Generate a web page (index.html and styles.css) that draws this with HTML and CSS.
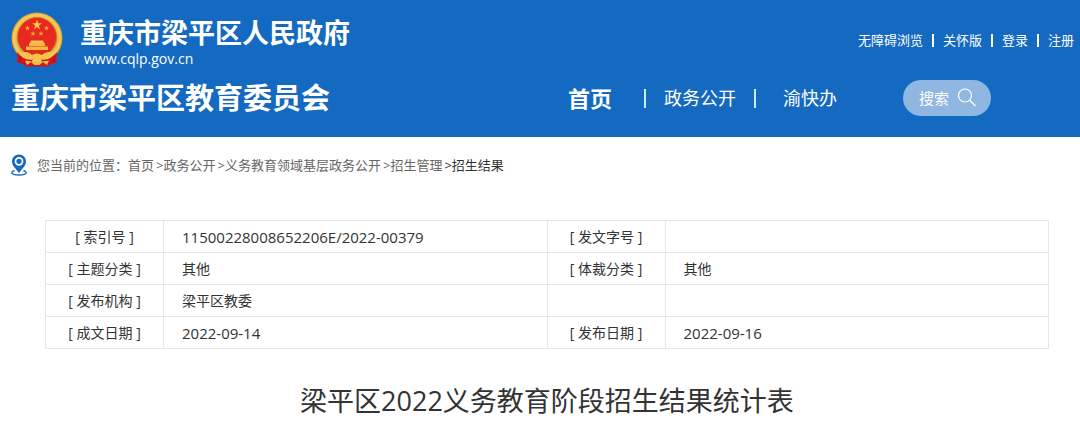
FILE: index.html
```html
<!DOCTYPE html>
<html lang="zh-CN">
<head>
  <meta charset="UTF-8">
  <meta name="viewport" content="width=device-width, initial-scale=1">
  <title>梁平区2022义务教育阶段招生结果统计表</title>
  <link rel="stylesheet" href="styles.css">
</head>
<body>

<header class="header">
  <div class="header-top">
    <a class="logo" href="#">
      <svg class="emblem" viewBox="0 0 52 56" aria-hidden="true">
        <path d="M8 38 L7 51 Q12 51 15 54.500 H37 Q40 51 45 51 L44 38 Z" fill="#d3141b"/>
        <circle cx="26" cy="26" r="25.500" fill="#dca136"/>
        <circle cx="26" cy="26" r="22.500" fill="none" stroke="#efc24e" stroke-width="4"/>
        <circle cx="26" cy="26" r="23" fill="none" stroke="#f5d468" stroke-width="1"/>
        <circle cx="26" cy="25" r="19.500" fill="#e9281f" stroke="#c9761e" stroke-width=".8"/>
        <path d="M26 7.500 L27.200 11.300 H31 L27.900 13.600 L29.100 17.400 L26 15 L22.900 17.400 L24.100 13.600 L21 11.300 H24.800 Z" fill="#f8c840"/>
        <g fill="#f3ad35">
          <path d="M16.500 13.500 l.7 1.700 h1.800 l-1.400 1.200 .5 1.800 -1.600-1 -1.600 1 .5-1.800 -1.400-1.200 h1.800z"/>
          <path d="M35.500 13.500 l.7 1.700 h1.800 l-1.400 1.200 .5 1.800 -1.600-1 -1.600 1 .5-1.800 -1.400-1.200 h1.800z"/>
          <path d="M22 19 l.7 1.700 h1.800 l-1.400 1.200 .5 1.800 -1.600-1 -1.600 1 .5-1.800 -1.400-1.200 h1.800z"/>
          <path d="M30 19 l.7 1.700 h1.800 l-1.400 1.200 .5 1.800 -1.600-1 -1.600 1 .5-1.800 -1.400-1.200 h1.800z"/>
        </g>
        <path d="M20 28.500 H32 L33 31 H19 Z" fill="#f6c552"/>
        <path d="M18 31 H34 V34 H18 Z" fill="#f3b843"/>
        <path d="M15 34.500 H37 V38 H15 Z" fill="#f3b843"/>
        <path d="M12 38.500 H40 Q35 44 26 44 Q17 44 12 38.500 Z" fill="#e2281c"/>
        <path d="M8 40 Q17 39 21 43 Q26 40 31 43 Q35 39 44 40 Q38 47 31 46 Q26 48 21 46 Q14 47 8 40 Z" fill="#f3c34b"/>
        <path d="M6 40 Q13 49 22 47.500 L18 54.500 Q12 50 6.500 51 Z M46 40 Q39 49 30 47.500 L34 54.500 Q40 50 45.500 51 Z" fill="#d5151c"/>
        <path d="M8 44 Q10 48 9 50 M44 44 Q42 48 43 50" stroke="#a80f14" stroke-width="1" fill="none"/>
        <circle cx="26" cy="45" r="2.500" fill="#f3c34b"/>
        <path d="M14 48.500 L21 49.500 L16 53 Z M38 48.500 L31 49.500 L36 53 Z M21 51 Q26 47 31 51 L28.500 53 H23.500 Z" fill="#f0bd45"/>
      </svg>
      <span class="logo-text">
        <span class="logo-name">重庆市梁平区人民政府</span>
        <span class="logo-url">www.cqlp.gov.cn</span>
      </span>
    </a>
    <nav class="top-links">
      <a href="#">无障碍浏览</a>
      <a href="#">关怀版</a>
      <a href="#">登录</a>
      <a href="#">注册</a>
    </nav>
  </div>

  <div class="header-main">
    <div class="dept">重庆市梁平区教育委员会</div>
    <nav class="nav">
      <a class="active" href="#">首页</a>
      <a class="wide" href="#">政务公开</a>
      <a href="#">渝快办</a>
    </nav>
    <form class="search">
      <input type="text" placeholder="搜索" aria-label="搜索">
      <button type="button" aria-label="搜索">
        <svg viewBox="0 0 20 20" width="20" height="20" fill="none" stroke="currentColor">
          <circle cx="8" cy="7.500" r="6.500" stroke-width="1.200"/>
          <path d="M12.700 12.200 L18.500 18" stroke-width="1.400"/>
        </svg>
      </button>
    </form>
  </div>
</header>

<nav class="crumbs">
  <svg class="pin" viewBox="0 0 16 22" aria-hidden="true">
    <path d="M3.500 16.500 C-1 18 0 21 8 21 S17 18 12.500 16.500" fill="none" stroke="#1469c1" stroke-width="1.400"/>
    <path d="M8 .5 C4 .5 1 3.500 1 7.500 C1 12 5 14.500 8 19 C11 14.500 15 12 15 7.500 C15 3.500 12 .5 8 .5 Z" fill="#1469c1"/>
    <circle cx="8" cy="7.300" r="3.500" fill="none" stroke="#fff" stroke-width="1.700"/>
  </svg>
  <span>您当前的位置：</span>
  <a href="#">首页</a>
  <a href="#">政务公开</a>
  <a href="#">义务教育领域基层政务公开</a>
  <a href="#">招生管理</a>
  <a class="current" href="#">招生结果</a>
</nav>

<main class="content">
  <table class="info">
    <tr>
      <th scope="row">[ 索引号 ]</th>
      <td class="num">11500228008652206E/2022-00379</td>
      <th scope="row">[ 发文字号 ]</th>
      <td></td>
    </tr>
    <tr>
      <th scope="row">[ 主题分类 ]</th>
      <td>其他</td>
      <th scope="row">[ 体裁分类 ]</th>
      <td>其他</td>
    </tr>
    <tr>
      <th scope="row">[ 发布机构 ]</th>
      <td>梁平区教委</td>
      <td></td>
      <td></td>
    </tr>
    <tr>
      <th scope="row">[ 成文日期 ]</th>
      <td class="num">2022-09-14</td>
      <th scope="row">[ 发布日期 ]</th>
      <td class="num">2022-09-16</td>
    </tr>
  </table>

  <h1>梁平区2022义务教育阶段招生结果统计表</h1>
</main>

</body>
</html>
```

FILE: styles.css
```css
* {
  box-sizing: border-box;
}

body {
  margin: 0;
  font-family: "Open Sans", "Noto Sans CJK SC", sans-serif;
  font-size: 14px;
  color: #333;
  background-color: #fff;
}

a {
  color: inherit;
  text-decoration: none;
}

/* 页头 */
.header {
  padding: 12px 6px 21px 11px;
  color: #fff;
  background-color: #1469c1;
}

.header-top,
.header-main,
.logo,
.top-links,
.nav,
.search,
.crumbs {
  display: flex;
  align-items: center;
}

.header-top {
  justify-content: space-between;
}

.logo {
  gap: 17px;
}

.emblem {
  width: 52px;
  height: 56px;
}

.logo-text {
  display: flex;
  flex-direction: column;
}

.logo-name {
  font-size: 27px;
  font-weight: bold;
  line-height: 38px;
}

.logo-url {
  padding-left: 4px;
  font-size: 14px;
  line-height: 14px;
}

.top-links {
  font-size: 13px;
  line-height: 18px;
}

.top-links a + a::before {
  content: "";
  display: inline-block;
  width: 2px;
  height: 13px;
  margin: 0 9px;
  background-color: #fff;
  vertical-align: -2px;
}

.header-main {
  margin-top: 12px;
  padding-right: 83px;
}

.dept {
  font-size: 29px;
  font-weight: bold;
  line-height: 36px;
}

.nav {
  margin-left: auto;
  font-size: 18px;
  line-height: 36px;
}

.nav a {
  display: flex;
  align-items: center;
}

.nav .active {
  font-size: 22px;
  font-weight: bold;
}

.nav a + a::before {
  content: "";
  width: 2px;
  height: 19px;
  margin: 0 27px 0 18px;
  background-color: #c5f0f5;
}

.nav a.wide::before {
  margin: 0 18px 0 32px;
}

.search {
  width: 88px;
  height: 36px;
  margin-left: 66px;
  padding: 0 14px 0 16px;
  border-radius: 18px;
  background-color: #8fb7e1;
}

.search input {
  flex: 1;
  min-width: 0;
  padding: 0;
  border: none;
  outline: none;
  font: inherit;
  font-size: 15px;
  color: #fff;
  background: none;
}

.search input::placeholder {
  color: #fff;
  opacity: 1;
}

.search button {
  display: flex;
  padding: 0;
  border: none;
  color: #fff;
  background: none;
  cursor: pointer;
}

/* 当前位置 */
.crumbs {
  padding: 16px 11px;
  font-size: 13px;
  line-height: 24px;
  color: #666;
}

.pin {
  width: 16px;
  height: 22px;
  margin-right: 10px;
}

.crumbs a + a::before {
  content: ">";
  margin-left: 2px;
}

.crumbs .current {
  color: #333;
}

/* 信息表 */
.content {
  padding: 27px 31px 8px 45px;
}

.info {
  width: 100%;
  table-layout: fixed;
  border-collapse: collapse;
}

.info th,
.info td {
  height: 32px;
  padding: 0 18px;
  border: 1px solid #e6e6e6;
  line-height: 22px;
  text-align: left;
}

.info th {
  width: 118px;
  padding: 0;
  font-weight: normal;
  text-align: center;
}

.info .num {
  font-size: 15px;
}

h1 {
  margin: 32px 0 0;
  font-size: 27px;
  font-weight: normal;
  line-height: 40px;
  text-align: center;
}
```
